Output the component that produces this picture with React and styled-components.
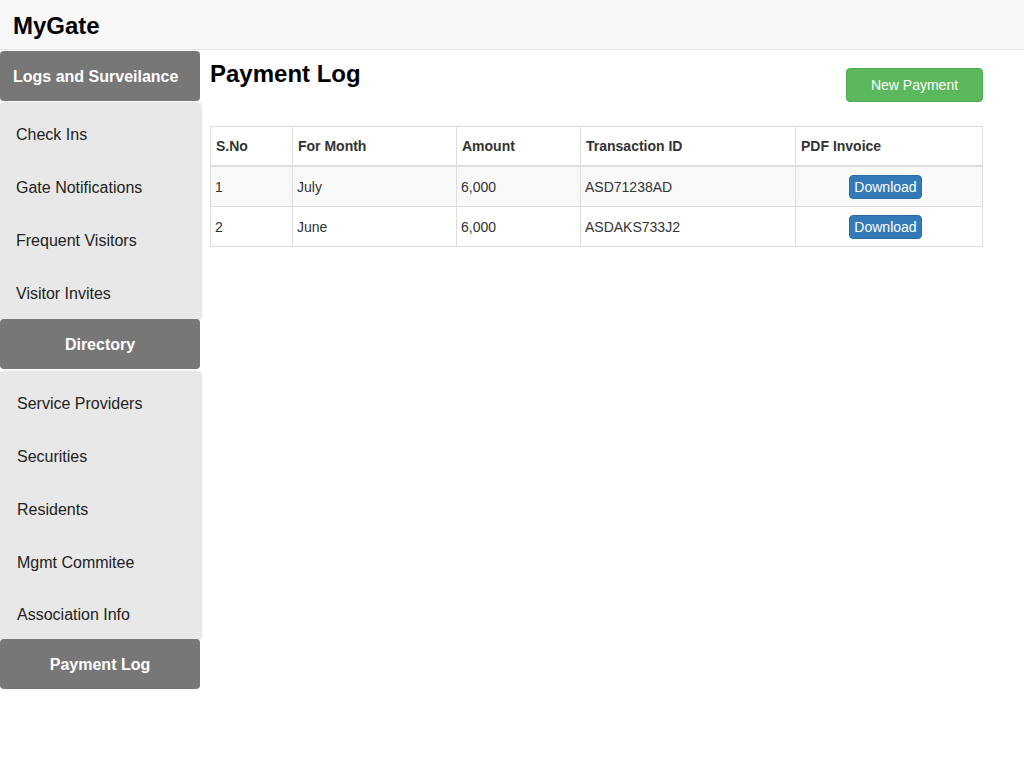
import React from "react";
import styled, { createGlobalStyle } from "styled-components";

const GlobalStyle = createGlobalStyle`
  html, body { margin: 0; padding: 0; background: #fff; }
  body { font-family: "Liberation Sans", Arial, sans-serif; font-size: 14px; color: #333; }
  * { box-sizing: border-box; }
`;

const Page = styled.div`
  width: 1024px;
  min-height: 768px;
`;

const TopBar = styled.header`
  height: 50px;
  background: #f8f8f8;
  border-bottom: 1px solid #e7e7e7;
  padding: 12px 13px 0;
`;

const Brand = styled.div`
  font-size: 24px;
  font-weight: bold;
  color: #000;
  line-height: 27px;
`;

const Body = styled.div`
  display: flex;
  align-items: flex-start;
`;

const Sidebar = styled.nav`
  width: 201px;
  flex: none;
  padding-top: 1px;
  display: flex;
  flex-direction: column;
`;

const SectionHead = styled.div`
  width: 200px;
  height: 50px;
  background: #777;
  color: #fff;
  border-radius: 4px;
  font-size: 16px;
  font-weight: bold;
  display: flex;
  align-items: center;
  justify-content: ${(p) => (p.$left ? "flex-start" : "center")};
  padding: ${(p) => (p.$left ? "2px 0 0 13px" : "2px 0 0")};
  position: relative;
  z-index: 1;
`;

const ItemList = styled.ul`
  list-style: none;
  margin: ${(p) => p.$mt || "1px"} 0 0;
  padding: 7px 0 0;
  width: 201px;
  background: #e8e8e8;
  border-radius: 4px;
  box-shadow: 0 1px 3px rgba(0, 0, 0, 0.22);
  height: ${(p) => p.$h}px;
`;

const Item = styled.li`
  height: 52.75px;
  display: flex;
  align-items: center;
  padding-left: ${(p) => p.$pl || 16}px;
  font-size: 16px;
  color: #222;
`;

const Main = styled.main`
  flex: 1;
  padding: 11px 42px 0 9px;
`;

const TitleRow = styled.div`
  display: flex;
  justify-content: space-between;
  align-items: flex-start;
`;

const Title = styled.h2`
  margin: 0;
  font-size: 24px;
  line-height: 26px;
  font-weight: bold;
  color: #000;
`;

const GreenButton = styled.button`
  margin-top: 7px;
  width: 137px;
  height: 34px;
  background: #5cb85c;
  border: 1px solid #4cae4c;
  border-radius: 4px;
  color: #fff;
  font-family: inherit;
  font-size: 14px;
`;

const Table = styled.table`
  margin-top: 24px;
  width: 772px;
  border-collapse: collapse;
  border: 1px solid #ddd;
  table-layout: fixed;
`;

const Th = styled.th`
  text-align: left;
  font-weight: bold;
  font-size: 14px;
  color: #333;
  padding: 9px 5px;
  line-height: 20px;
  border: 1px solid #ddd;
  border-bottom: 2px solid #ddd;
  width: ${(p) => p.$w}px;
`;

const Row = styled.tr`
  background: ${(p) => (p.$striped ? "#f9f9f9" : "#fff")};
`;

const Td = styled.td`
  padding: 7.5px 4px;
  line-height: 20px;
  font-size: 14px;
  color: #333;
  border: 1px solid #ddd;
  text-align: ${(p) => (p.$center ? "center" : "left")};
  vertical-align: middle;
`;

const BlueButton = styled.button`
  display: inline-block;
  height: 24px;
  padding: 0 4px;
  background: #337ab7;
  border: 1px solid #2e6da4;
  border-radius: 4px;
  color: #fff;
  font-family: inherit;
  font-size: 14px;
  line-height: 20px;
  vertical-align: middle;
  margin-left: -7px;
`;

const logs = ["Check Ins", "Gate Notifications", "Frequent Visitors", "Visitor Invites"];
const directory = ["Service Providers", "Securities", "Residents", "Mgmt Commitee", "Association Info"];
const rows = [
  { n: 1, month: "July", amount: "6,000", id: "ASD71238AD" },
  { n: 2, month: "June", amount: "6,000", id: "ASDAKS733J2" },
];

export default function App() {
  return (
    <Page>
      <GlobalStyle />
      <TopBar>
        <Brand>MyGate</Brand>
      </TopBar>
      <Body>
        <Sidebar>
          <SectionHead $left>Logs and Surveilance</SectionHead>
          <ItemList $h={217}>
            {logs.map((l) => (
              <Item key={l}>{l}</Item>
            ))}
          </ItemList>
          <SectionHead>Directory</SectionHead>
          <ItemList $h={268} $mt="2px">
            {directory.map((l) => (
              <Item key={l} $pl={17}>{l}</Item>
            ))}
          </ItemList>
          <SectionHead>Payment Log</SectionHead>
        </Sidebar>
        <Main>
          <TitleRow>
            <Title>Payment Log</Title>
            <GreenButton>New Payment</GreenButton>
          </TitleRow>
          <Table>
            <thead>
              <tr>
                <Th $w={82}>S.No</Th>
                <Th $w={164}>For Month</Th>
                <Th $w={124}>Amount</Th>
                <Th $w={215}>Transaction ID</Th>
                <Th $w={187}>PDF Invoice</Th>
              </tr>
            </thead>
            <tbody>
              {rows.map((r, i) => (
                <Row key={r.n} $striped={i % 2 === 0}>
                  <Td>{r.n}</Td>
                  <Td>{r.month}</Td>
                  <Td>{r.amount}</Td>
                  <Td>{r.id}</Td>
                  <Td $center>
                    <BlueButton>Download</BlueButton>
                  </Td>
                </Row>
              ))}
            </tbody>
          </Table>
        </Main>
      </Body>
    </Page>
  );
}
